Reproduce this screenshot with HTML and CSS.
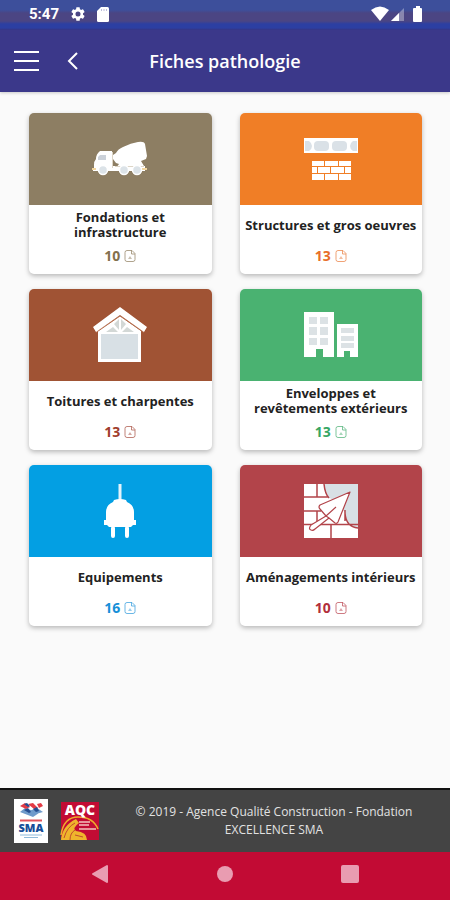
FILE: index.html
```html
<!DOCTYPE html>
<html lang="fr">
<head>
<meta charset="utf-8">
<meta name="viewport" content="width=device-width, initial-scale=1">
<title>Fiches pathologie</title>
<link rel="stylesheet" href="styles.css">
</head>
<body>
<svg width="0" height="0" class="sprite" aria-hidden="true">
  <symbol id="doc" viewBox="0 0 12 14">
    <path d="M3 1.500h5L11 4.500v6q0 2-2 2H3q-2 0-2-2v-7q0-2 2-2zM7.500 1.500v3.500H11" fill="none" stroke="currentColor" stroke-width=".8"/>
    <path d="M4 10l2-3 2 3z" fill="currentColor" opacity=".55"/>
  </symbol>
</svg>

<div class="status">
  <div class="status-group">
    <span class="clock">5:47</span>
    <svg width="14" height="14" viewBox="2 2 20 20" fill="#fff" aria-hidden="true"><path fill-rule="evenodd" d="M19.140 12.940c.04-.3.060-.61.060-.94 0-.32-.02-.64-.07-.94l2.030-1.580a.49.490 0 0 0 .12-.61l-1.920-3.320a.49.490 0 0 0-.59-.22l-2.390.96a7 7 0 0 0-1.620-.94l-.36-2.540a.48.480 0 0 0-.48-.41h-3.840a.47.470 0 0 0-.47.410l-.36 2.540c-.59.240-1.130.570-1.620.940l-2.390-.96a.48.480 0 0 0-.59.220L2.740 8.870a.47.470 0 0 0 .12.610l2.030 1.580a7 7 0 0 0-.02 1.880l-2.030 1.580a.49.490 0 0 0-.12.610l1.920 3.320c.12.220.370.290.590.220l2.390-.96c.5.380 1.030.700 1.620.940l.36 2.540c.05.240.240.410.480.410h3.840c.24 0 .44-.17.470-.41l.36-2.540a7 7 0 0 0 1.620-.94l2.390.96c.22.080.470 0 .59-.22l1.920-3.320a.47.470 0 0 0-.12-.61zM12 15.600a3.600 3.600 0 1 1 0-7.200 3.600 3.600 0 0 1 0 7.200z"/></svg>
    <svg width="12" height="15" viewBox="0 0 12 15" aria-hidden="true"><path d="M4 0h6.500Q12 0 12 1.500v12q0 1.500-1.500 1.500h-9Q0 15 0 13.500V4z" fill="#fff"/><path d="M4.500 2v2M7 2v2M9.500 2v2" stroke="#aaa9d0" stroke-width=".8"/></svg>
  </div>
  <svg width="52" height="16" viewBox="0 0 52 16" fill="#fff" aria-hidden="true">
    <path d="M0 4q9-7 18 0L9 15z"/>
    <path d="M33 2v13H20z" opacity=".35"/><path d="M28 7v8h-8z"/>
    <path d="M43 2h2V0h4v2h1q1 0 1 1v12q0 1-1 1h-7q-1 0-1-1V3q0-1 1-1z"/>
  </svg>
</div>

<header class="bar">
  <button class="icon-btn" aria-label="Menu"><svg width="26" height="22" viewBox="0 0 26 22"><path d="M0 2h25M0 11h25M0 20h25" stroke="#fff" stroke-width="2"/></svg></button>
  <button class="icon-btn" aria-label="Retour"><svg width="12" height="18" viewBox="0 0 12 18"><path d="M11 1L3 9l8 8" fill="none" stroke="#fff" stroke-width="2"/></svg></button>
  <h1>Fiches pathologie</h1>
</header>

<main class="grid">
  <a class="card sand" href="#fondations">
    <span class="art"><svg width="56" height="56" viewBox="0 0 56 56" aria-hidden="true">
      <path d="M2 34q0-4 2-6 0-5 4-8h12v15h33v5H1v-3h1z" fill="#fff"/>
      <path d="M21 24l3-2q2-4 7-6 8-4 15-5 6-1 7 2l2 12-1 3-5 2 3 5-2 2H24l3-4-3-1-3-4z" fill="#fff"/>
      <path d="M20.500 21v16M23 35.500h29" stroke="#ddd5c6" fill="none"/>
      <path d="M8 24h6v5H6v-3z" fill="#cbd1d9"/>
      <path d="M0 38h4M50 38h5" stroke="#f2d6a0" stroke-width="2"/>
      <g fill="#dce3e8" stroke="#fff" stroke-width="1.500"><circle cx="11" cy="39" r="4.500"/><circle cx="32" cy="39" r="4.500"/><circle cx="45" cy="39" r="4.500"/></g>
    </svg></span>
    <span class="title">Fondations et infrastructure</span>
    <span class="count">10 <svg class="doc"><use href="#doc"/></svg></span>
  </a>

  <a class="card orange" href="#structures">
    <span class="art"><svg width="56" height="56" viewBox="0 0 56 56" aria-hidden="true">
      <path d="M1 7h54v15H1z" fill="#fff"/>
      <g fill="#dae1e7"><path d="M2 10h4q3 2 3 5t-3 5H2zM54 10h-4q-3 2-3 5t3 5h4z"/><rect x="11" y="10" width="15" height="10" rx="4"/><rect x="29" y="10" width="15" height="10" rx="4"/></g>
      <path d="M9 30h12v5H9zM22 30h13v5H22zM36 30h12v5H36zM9 36h5v6H9zM15 36h12v6H15zM28 36h13v6H28zM42 36h6v6h-6zM9 43h12v6H9zM22 43h13v6H22zM36 43h12v6H36z" fill="#fff"/>
    </svg></span>
    <span class="title">Structures et gros oeuvres</span>
    <span class="count">13 <svg class="doc"><use href="#doc"/></svg></span>
  </a>

  <a class="card brown" href="#toitures">
    <span class="art"><svg width="56" height="56" viewBox="0 0 56 56" aria-hidden="true">
      <path d="M6 24L28 9l21 15v31H6z" fill="#fff"/>
      <path d="M9 27h37v25H9z" fill="#d8e0e5"/>
      <path d="M14 25l7-5 5 5zM30 25l5-5 7 5zM27 12v11l-5-6zM29 12v11l5-6z" fill="#d3d8d6"/>
      <path d="M4 25.500L28 9l24 16.500" fill="none" stroke="#b86e4c"/>
      <path d="M1 20L28 0l27 20-3 5L28 8 4 25z" fill="#fff"/>
    </svg></span>
    <span class="title">Toitures et charpentes</span>
    <span class="count">13 <svg class="doc"><use href="#doc"/></svg></span>
  </a>

  <a class="card green" href="#enveloppes">
    <span class="art"><svg width="56" height="56" viewBox="0 0 56 56" aria-hidden="true">
      <path d="M1 5h30v45H20v-8h-7v8H1zM34 17h21v33h-8v-6h-6v6h-7z" fill="#fff"/>
      <path d="M6 10h8v7H6zM17 10h8v7h-8zM6 20h8v8H6zM17 20h8v8h-8zM6 31h8v7H6zM17 31h8v7h-8zM38 21h13v5H38zM38 29h13v5H38zM38 36h13v5H38z" fill="#dce2e5"/>
    </svg></span>
    <span class="title">Enveloppes et revêtements extérieurs</span>
    <span class="count">13 <svg class="doc"><use href="#doc"/></svg></span>
  </a>

  <a class="card blue" href="#equipements">
    <span class="art"><svg width="56" height="56" viewBox="0 0 56 56" aria-hidden="true">
      <path d="M28 1v16" stroke="#e4f3fb" stroke-width="3"/>
      <path d="M22 17q6-2 12 0l1 2q7 3 7 10v8h2v5h-3l-2 2H17l-2-2h-3v-5h2v-8q0-7 7-10z" fill="#fff"/>
      <path d="M21 45v8M35 45v8" stroke="#fff" stroke-width="4" stroke-linecap="round"/>
    </svg></span>
    <span class="title">Equipements</span>
    <span class="count">16 <svg class="doc"><use href="#doc"/></svg></span>
  </a>

  <a class="card red" href="#amenagements">
    <span class="art"><svg width="56" height="56" viewBox="0 0 56 56" aria-hidden="true">
      <path d="M1 1h54v54H1z" fill="#fff"/>
      <path d="M21 1h34v44q-9 0-11-7-1-4-2-8l-8-12-8-3q-4-4-5-14z" fill="#d8e0e5"/>
      <path d="M1 14h24M1 28h17M1 41.500h54M14 1v13M14 28v13M28 42v13M21 1q1 10 5 14M42 27v11M42 30q1 14 13 15" fill="none" stroke="#b2444a" stroke-width="1.500"/>
      <path d="M47 9L17 22q-2 2 0 4l6 7L8 42q-3 4 0 5 2 1 4-1l14-11 6 5q2 1 3-1z" fill="#fff" stroke="#b2444a" stroke-width="1.200" stroke-linejoin="round"/>
      <path d="M23 33l10-9M23 33l3 2" fill="none" stroke="#b2444a" stroke-width="1.200"/>
    </svg></span>
    <span class="title">Aménagements intérieurs</span>
    <span class="count">10 <svg class="doc"><use href="#doc"/></svg></span>
  </a>
</main>

<footer class="footer">
  <svg width="34" height="44" viewBox="0 0 34 44" role="img" aria-label="SMA">
    <path d="M0 0h34v44H0z" fill="#fff"/>
    <path d="M6 13l5-4 14 5-6 4zM15 12l8-3 6 4-7 2z" fill="#6f9bcb"/>
    <path d="M6 7l5-3 5 4-4 2zM14 5l5-1 5 5-4 1zM23 5l4-1 2 3-4 2z" fill="#e33b45"/>
    <path d="M10 11l4-2 3 4-2 1zM19 10l4-2 2 4-3 1zM10 5l3-1 3 3-2 1z" fill="#254e91"/>
    <path d="M6 21.500h22" stroke="#e0535b" stroke-width="2"/>
    <text x="17" y="33" text-anchor="middle" class="sma">SMA</text>
    <path d="M6 36h22M10 38.500h14" stroke="#8fbada"/>
  </svg>
  <svg class="logo-aqc" width="38" height="38" viewBox="0 0 38 38" role="img" aria-label="AQC">
    <path d="M0 0h38v38H0z" fill="#c20c34"/>
    <path d="M0 33C2 20 9 15 17 15q15 0 20 12" fill="none" stroke="#efac2c" stroke-width="1.500"/>
    <path d="M0 38q1-14 15-21l3 4q-7 5-3 8 11 1 11 9z" fill="#efb52c"/>
    <path d="M3 36q3-11 11-15M9 38q0-7 5-10M14 33l8 2" fill="none" stroke="#c24b2c"/>
    <path d="M18 20h11M18 23h10M18 27h17" stroke="#f3c2bd" stroke-width="1.500"/>
    <text x="19" y="13" text-anchor="middle" class="aqc">AQC</text>
  </svg>
  <p>© 2019 - Agence Qualité Construction - Fondation EXCELLENCE SMA</p>
</footer>

<nav class="nav" aria-label="Système">
  <button class="icon-btn" aria-label="Précédent"><svg width="18" height="20" viewBox="0 0 18 20"><path d="M16 2v16L2 10z" fill="#e99cb1" stroke="#e99cb1" stroke-width="2" stroke-linejoin="round"/></svg></button>
  <button class="icon-btn" aria-label="Accueil"><svg width="18" height="18" viewBox="0 0 18 18"><circle cx="9" cy="9" r="8" fill="#e99cb1"/></svg></button>
  <button class="icon-btn" aria-label="Applications récentes"><svg width="18" height="18" viewBox="0 0 18 18"><rect x="0" y="0" width="18" height="18" rx="2" fill="#e99cb1"/></svg></button>
</nav>
</body>
</html>
```
FILE: styles.css
```css
* { box-sizing: border-box; }

body {
  margin: 0;
  min-height: 100vh;
  display: flex;
  flex-direction: column;
  background: #fafafa;
  font-family: "Open Sans", "Noto Sans", sans-serif;
}

.sprite { position: absolute; }
svg { display: block; flex: none; }

.icon-btn {
  display: flex;
  padding: 0;
  border: 0;
  background: none;
}

.status {
  display: flex;
  justify-content: space-between;
  align-items: center;
  height: 30px;
  padding: 0 27px 2px 29px;
  background: linear-gradient(#3d4f9b 0 10px, #4b4583 13px 21px, #2c3fa2 24px 28px, #393789 30px);
}

.status-group { display: flex; align-items: center; gap: 12px; }

.clock {
  color: #fff;
  font: 700 15px/20px Roboto, sans-serif;
}

.bar {
  display: grid;
  grid-template-columns: 26px 12px 1fr 64px;
  column-gap: 26px;
  align-items: center;
  height: 62px;
  padding: 0 14px;
  background: #3b388a;
  box-shadow: 0 1px 3px #0003;
}

h1 {
  margin: 0;
  color: #fff;
  font-size: 18px;
  line-height: 24px;
  font-weight: 600;
  text-align: center;
}

.grid {
  flex: 1;
  display: grid;
  grid-template-columns: 1fr 1fr;
  align-content: start;
  gap: 15px 28px;
  padding: 21px 28px 21px 29px;
}

.card {
  display: grid;
  grid-template-rows: 92px 40px 30px;
  justify-items: center;
  align-items: center;
  height: 161px;
  overflow: hidden;
  border-radius: 5px;
  background: #fff;
  box-shadow: 0 2px 5px #0004;
  text-decoration: none;
}

.art {
  display: flex;
  justify-content: center;
  align-items: center;
  width: 100%;
  height: 100%;
  background: var(--tone);
}

.title {
  padding: 0 4px;
  color: #222;
  font-size: 13px;
  line-height: 15px;
  font-weight: 700;
  text-align: center;
}

.count {
  display: flex;
  align-items: center;
  gap: 4px;
  padding-bottom: 8px;
  color: var(--ink);
  font-size: 14px;
  line-height: 20px;
  font-weight: 700;
}

.doc { width: 12px; height: 14px; opacity: .8; }

.sand { --tone: #8d7e63; --ink: #83704d; }
.orange { --tone: #f07e26; --ink: #e86e28; }
.brown { --tone: #a05334; --ink: #a03d2d; }
.green { --tone: #4ab271; --ink: #36a663; }
.blue { --tone: #039fe3; --ink: #168fd8; }
.red { --tone: #b2444a; --ink: #b22f3b; }

.footer {
  display: flex;
  align-items: center;
  gap: 13px;
  height: 64px;
  padding: 0 14px;
  border-top: 2px solid #111;
  background: #444;
}

.footer p {
  flex: 1;
  margin: 0;
  color: #e2e2e2;
  font-size: 12px;
  line-height: 18px;
  text-align: center;
}

.logo-aqc { overflow: visible; }
.sma { fill: #174e98; font: 800 11px "Open Sans", sans-serif; }
.aqc { fill: #fff; font: 800 14px "Open Sans", sans-serif; }

.nav {
  display: flex;
  justify-content: space-between;
  align-items: center;
  height: 48px;
  padding: 0 91px 4px;
  background: #c20b34;
}
```
